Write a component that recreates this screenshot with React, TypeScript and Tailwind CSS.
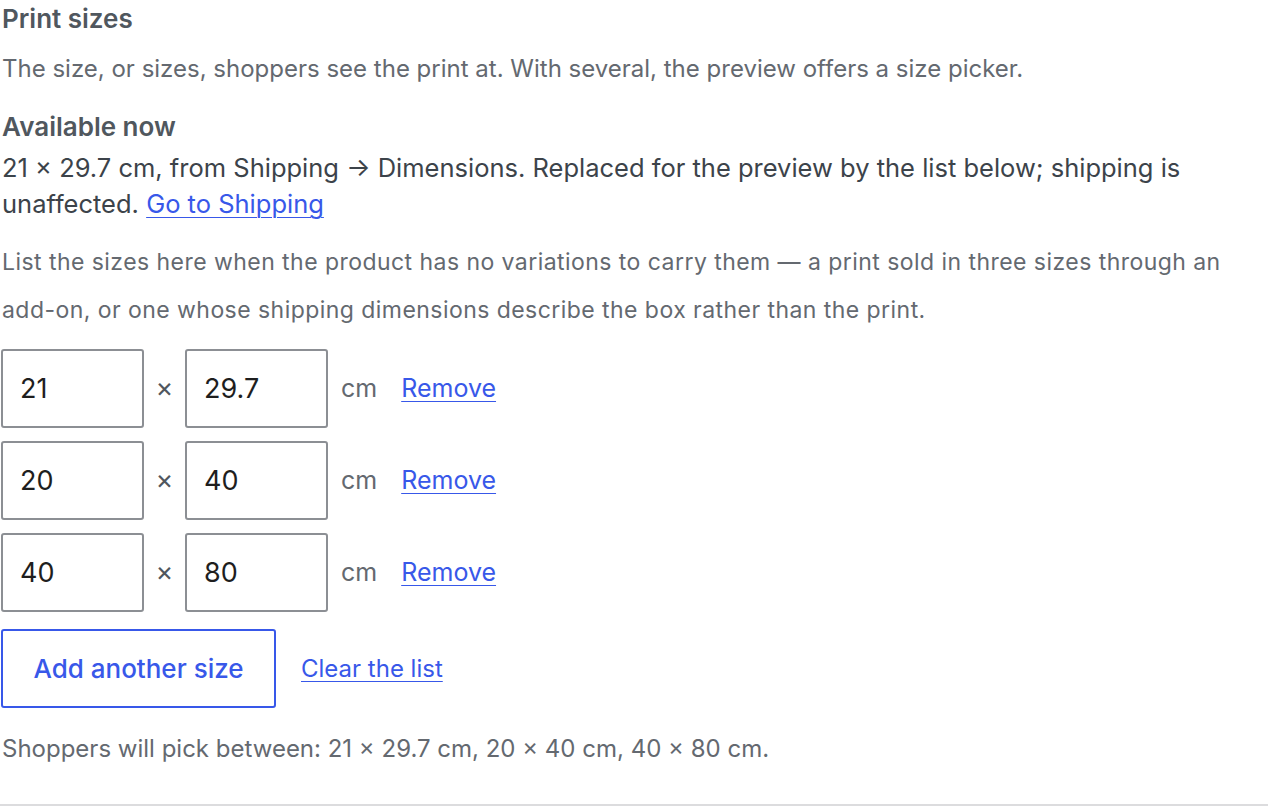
import { useState } from "react";

type Size = { w: string; h: string };

export default function App() {
  const [sizes, setSizes] = useState<Size[]>([
    { w: "21", h: "29.7" },
    { w: "20", h: "40" },
    { w: "40", h: "80" },
  ]);

  const summary = sizes.map((s) => `${s.w} × ${s.h} cm`).join(", ");

  return (
    <div className="min-h-screen bg-white font-['Inter',sans-serif]">
      <div className="pt-[5px] pl-[2px]">
        {/* heading */}
        <h3 className="text-[26px] leading-[28px] font-semibold text-[#50575e]">
          Print sizes
        </h3>
        <p className="mt-[21px] text-[24px] leading-[30px] text-[#646970]">
          The size, or sizes, shoppers see the print at. With several, the preview offers a size picker.
        </p>

        {/* current dimensions */}
        <h4 className="mt-[29px] text-[26px] leading-[28px] font-semibold text-[#50575e]">
          Available now
        </h4>
        <p className="mt-[9px] text-[25.5px] leading-[36px] text-[#3c434a]">
          21 × 29.7 cm, from Shipping → Dimensions. Replaced for the preview by the list below; shipping is
          unaffected.{" "}
          <a href="#" className="text-[#3858e9] underline underline-offset-4 decoration-1">
            Go to Shipping
          </a>
        </p>

        <p className="mt-[16px] text-[23px] leading-[48px] tracking-[0.45px] text-[#646970]">
          List the sizes here when the product has no variations to carry them — a print sold in three sizes through an
          add-on, or one whose shipping dimensions describe the box rather than the print.
        </p>

        {/* size rows */}
        <div className="mt-[15px] flex flex-col gap-[13px]">
          {sizes.map((s, i) => (
            <div key={i} className="flex items-center">
              <input
                value={s.w}
                onChange={(e) =>
                  setSizes(sizes.map((x, j) => (j === i ? { ...x, w: e.target.value } : x)))
                }
                className="-ml-[1px] h-[79px] w-[143px] rounded-[3px] border-2 border-[#8c8f94] px-[17px] text-[27px] text-[#1e1e1e] outline-none"
              />
              <span className="w-[41px] text-center text-[27px] text-[#50575e]">×</span>
              <input
                value={s.h}
                onChange={(e) =>
                  setSizes(sizes.map((x, j) => (j === i ? { ...x, h: e.target.value } : x)))
                }
                className="h-[79px] w-[143px] rounded-[3px] border-2 border-[#8c8f94] px-[17px] text-[27px] text-[#1e1e1e] outline-none"
              />
              <span className="ml-[13px] text-[25px] text-[#646970]">cm</span>
              <a
                href="#"
                onClick={(e) => {
                  e.preventDefault();
                  setSizes(sizes.filter((_, j) => j !== i));
                }}
                className="ml-[24px] text-[25px] text-[#3858e9] underline underline-offset-4 decoration-1"
              >
                Remove
              </a>
            </div>
          ))}
        </div>

        {/* actions */}
        <div className="mt-[17px] flex items-center">
          <button
            onClick={() => setSizes([...sizes, { w: "", h: "" }])}
            className="-ml-[1px] h-[79px] w-[275px] rounded-[3px] border-2 border-[#3858e9] bg-white text-[26px] font-medium text-[#3858e9]"
          >
            Add another size
          </button>
          <a
            href="#"
            onClick={(e) => {
              e.preventDefault();
              setSizes([]);
            }}
            className="ml-[25px] text-[24px] text-[#3858e9] underline underline-offset-4 decoration-1"
          >
            Clear the list
          </a>
        </div>

        <p className="mt-[26px] text-[24px] leading-[30px] text-[#646970]">
          Shoppers will pick between: {summary}.
        </p>
      </div>
      <div className="mt-[40px] h-[2px] bg-[#dcdcde]" />
    </div>
  );
}
